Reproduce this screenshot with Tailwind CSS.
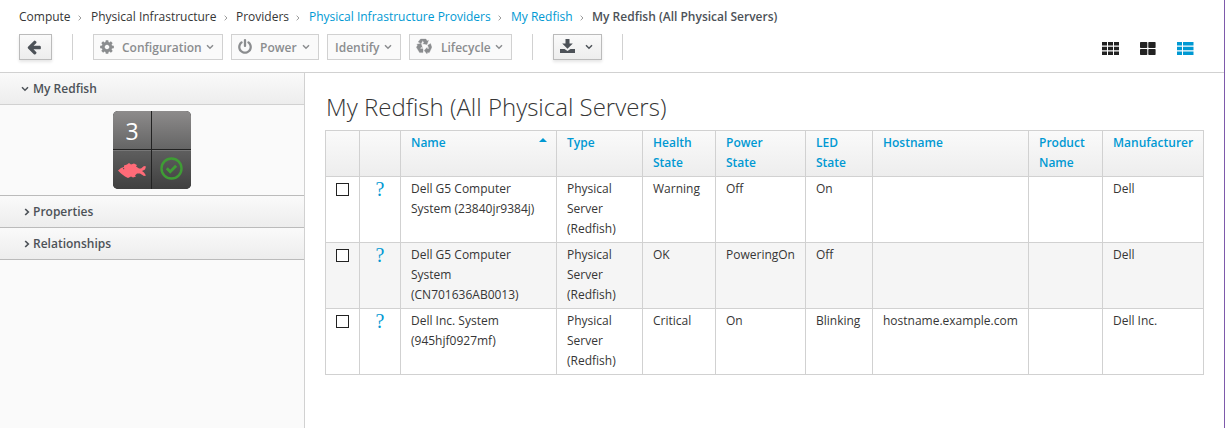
<!DOCTYPE html>
<html lang="en">
<head>
<meta charset="utf-8">
<title>My Redfish (All Physical Servers)</title>
<script src="https://cdn.jsdelivr.net/npm/@tailwindcss/browser@4"></script>
</head>
<body class="h-[428px] overflow-hidden bg-white font-['Open_Sans',sans-serif] text-xs leading-5 text-[#363636]">
<svg class="hidden">
  <symbol id="down" viewBox="0 0 8 6"><path d="M1 1.300 4 4.200 7 1.300" fill="none" stroke="currentColor" stroke-width="1.500"/></symbol>
  <symbol id="right" viewBox="0 0 6 8"><path d="M1.200 1 4.300 4 1.200 7" fill="none" stroke="currentColor" stroke-width="1.700"/></symbol>
  <symbol id="crumb" viewBox="0 0 4 6"><path d="M.6.700 3 3 .6 5.300" fill="none" stroke="currentColor" stroke-width="1"/></symbol>
</svg>
<div class="flex h-full flex-col border-r border-[#7e5aab]">
  <header class="flex h-[73px] shrink-0 flex-col border-b border-[#d1d1d1] pl-[19px]">
    <nav class="flex h-[34px] items-center whitespace-nowrap">
      <span class="w-[72px]">Compute<svg class="ml-[7px] inline h-1.5 w-1 text-[#9c9c9c]"><use href="#crumb"/></svg></span>
      <span class="w-[145px]">Physical Infrastructure<svg class="ml-[7px] inline h-1.5 w-1 text-[#9c9c9c]"><use href="#crumb"/></svg></span>
      <span class="w-[73px]">Providers<svg class="ml-[7px] inline h-1.5 w-1 text-[#9c9c9c]"><use href="#crumb"/></svg></span>
      <span class="w-[202px]"><a class="text-[#0099d3]">Physical Infrastructure Providers</a><svg class="ml-[7px] inline h-1.5 w-1 text-[#9c9c9c]"><use href="#crumb"/></svg></span>
      <span class="w-[81px]"><a class="text-[#0099d3]">My Redfish</a><svg class="ml-[7px] inline h-1.5 w-1 text-[#9c9c9c]"><use href="#crumb"/></svg></span>
      <span class="font-semibold text-[#4d5258]">My Redfish (All Physical Servers)</span>
    </nav>
    <div class="flex h-[26px] font-semibold text-[#8b8d8f]">
      <button class="flex w-[33px] items-center border border-[#bbb] bg-linear-to-b from-[#fafafa] to-[#ededed] pl-1.5 text-[#4d5258] shadow-[0_2px_3px_rgba(3,3,3,0.1)]"><svg class="h-4 w-4" viewBox="0 0 1792 1792" fill="currentColor"><path d="M1664 896v128q0 53-32.5 90.5t-84.5 37.5h-704l293 294q38 36 38 90t-38 90l-75 76q-37 37-90 37-52 0-91-37l-651-652q-37-37-37-90 0-52 37-91l651-650q38-38 91-38 52 0 90 38l75 74q38 38 38 91t-38 91l-293 293h704q52 0 84.5 37.5t32.5 90.5z"/></svg></button>
      <div class="ml-5 w-px bg-[#d1d1d1]"></div>
      <button class="ml-5 flex w-[130px] items-center border border-[#d1d1d1] bg-[#fafafa] pl-[5px]"><svg class="h-4 w-4" viewBox="0 0 1792 1792" fill="currentColor"><path d="M1152 896q0-106-75-181t-181-75-181 75-75 181 75 181 181 75 181-75 75-181zm512-109v222q0 12-8 23t-20 13l-185 28q-19 54-39 91 35 50 107 138 10 12 10 25t-9 23q-27 37-99 108t-94 71q-12 0-26-9l-138-108q-44 23-91 38-16 136-29 186-7 28-36 28h-222q-14 0-24.5-8.5t-11.5-21.5l-28-184q-49-16-90-37l-141 107q-10 9-25 9-14 0-25-11-126-114-165-168-7-10-7-23 0-12 8-23 15-21 51-66.5t54-70.5q-27-50-41-99l-183-27q-13-2-21-12.5t-8-23.5v-222q0-12 8-23t19-13l186-28q14-46 39-92-40-57-107-138-10-12-10-24 0-10 9-23 26-36 98.5-107.5t94.5-71.5q13 0 26 10l138 107q44-23 91-38 16-136 29-186 7-28 36-28h222q14 0 24.5 8.5t11.5 21.5l28 184q49 16 90 37l142-107q9-9 24-9 13 0 25 10 129 119 165 170 7 8 7 22 0 12-8 23-15 21-51 66.5t-54 70.5q26 50 41 98l183 28q13 2 21 12.5t8 23.5z"/></svg><span class="ml-[7px] w-[84px] pt-px text-left">Configuration</span><svg class="h-1.5 w-2"><use href="#down"/></svg></button>
      <button class="ml-2 flex w-[88px] items-center border border-[#d1d1d1] bg-[#fafafa] pl-[5px]"><svg class="h-4 w-4" viewBox="0 0 1792 1792" fill="currentColor"><path d="M1664 896q0 156-61 298t-164 245-245 164-298 61-298-61-245-164-164-245-61-298q0-182 80.5-343t226.5-270q43-32 95.5-25t83.5 50q32 42 24.5 94.5t-49.5 84.5q-98 74-151.5 181t-53.5 228q0 104 40.5 198.5t109.5 163.5 163.5 109.5 198.5 40.5 198.5-40.5 163.5-109.5 109.5-163.5 40.5-198.5q0-121-53.5-228t-151.5-181q-42-32-49.5-84.5t24.5-94.5q31-43 84-50t95 25q146 109 226.5 270t80.5 343zm-640-768v640q0 52-38 90t-90 38-90-38-38-90v-640q0-52 38-90t90-38 90 38 38 90z"/></svg><span class="ml-[7px] w-[42px] pt-px text-left">Power</span><svg class="h-1.5 w-2"><use href="#down"/></svg></button>
      <button class="ml-2 flex w-[74px] items-center border border-[#d1d1d1] bg-[#fafafa] pl-[7px]"><span class="w-[49px] pt-px text-left">Identify</span><svg class="h-1.5 w-2"><use href="#down"/></svg></button>
      <button class="ml-2 flex w-[103px] items-center border border-[#d1d1d1] bg-[#fafafa] pl-[6px]"><svg class="mb-0.5 h-4 w-4" viewBox="0 0 16 16" fill="currentColor" stroke="currentColor" stroke-width=".3"><path d="M4.600 1h5.300l1.300 2 1.300-.7-1.500 4.200-4.300-.7 1.400-.8L6.700 2.600 5.200 5.600 2.200 3.900zM.8 6.200l4.200-.6 1.400 4-1.200-.7-1 1.800H7v3.900H3.600L.4 9.300l1.300-2.200zM11.800 7.200l2.700-1.600 1.300 3.700-2.500 5.300h-2.200v1.300l-2.900-3.300 2.900-3.200v1.300h2z"/></svg><span class="ml-[9px] w-[54px] pt-px text-left">Lifecycle</span><svg class="h-1.5 w-2"><use href="#down"/></svg></button>
      <div class="ml-5 w-px bg-[#d1d1d1]"></div>
      <button class="ml-5 flex w-[49px] items-center border border-[#bbb] bg-linear-to-b from-[#fafafa] to-[#ededed] pl-[6px] text-[#4d5258] shadow-[0_2px_3px_rgba(3,3,3,0.1)]"><svg class="mb-[3px] h-[14px] w-[15px]" viewBox="0 0 15 14" fill="currentColor"><path d="M5.500 0h4v4.500h3.300L7.500 9.800 2.200 4.500h3.300zM0 10h4.500l3 2 3-2H15v4H0z"/></svg><svg class="ml-[10px] h-1.5 w-2"><use href="#down"/></svg></button>
      <div class="ml-5 w-px bg-[#d1d1d1]"></div>
      <div class="ml-auto flex items-center gap-[21px] pt-[3px] pr-[30px]">
        <svg class="h-[13px] w-[17px]" viewBox="0 0 17 13" fill="#222"><path d="M0 0h5v3.500H0zM6 0h5v3.500H6zM12 0h5v3.500h-5zM0 4.700h5v3.500H0zM6 4.700h5v3.500H6zM12 4.700h5v3.500h-5zM0 9.400h5V13H0zM6 9.400h5V13H6zM12 9.400h5V13h-5z"/></svg>
        <svg class="h-[13px] w-4" viewBox="0 0 16 13" fill="#222"><rect width="7.300" height="6" rx=".7"/><rect x="8.300" width="7.300" height="6" rx=".7"/><rect y="7" width="7.300" height="6" rx=".7"/><rect x="8.300" y="7" width="7.300" height="6" rx=".7"/></svg>
        <svg class="h-[13px] w-[17px]" viewBox="0 0 17 13" fill="#0099d3"><path d="M0 0h5v3.500H0zM6 0h10.500v3.500H6zM0 4.700h5v3.500H0zM6 4.700h10.500v3.500H6zM0 9.400h5V13H0zM6 9.400h10.500V13H6z"/></svg>
      </div>
    </div>
  </header>
  <div class="flex min-h-0 flex-1">
    <aside class="w-[305px] shrink-0 border-r border-[#d1d1d1] bg-[#fafafa] font-semibold text-[#4d5258]">
      <div class="flex h-8 items-center border-b border-[#d1d1d1] bg-linear-to-b from-[#fafafa] to-[#ededed] pl-[21px]"><svg class="mr-1 h-1.5 w-2"><use href="#down"/></svg>My Redfish</div>
      <div class="flex h-[91px] justify-center border-b border-[#bbb] pt-1.5">
        <div class="grid h-[78px] w-[78px] grid-cols-[38px_39px] grid-rows-[38px_39px] gap-px overflow-hidden rounded-[5px] bg-[#222]">
          <div class="flex items-center justify-center bg-linear-to-b from-[#8d8b8b] to-[#656565] pt-[2px] text-[23px] font-normal text-white">3</div>
          <div class="bg-linear-to-b from-[#8d8b8b] to-[#656565]"></div>
          <div class="flex items-center justify-center border-t border-[#777] bg-linear-to-b from-[#5e5e5e] to-[#404040]"><svg class="h-[15px] w-7" viewBox="0 0 28 15" fill="#ff6b78"><path d="M0 7.500 3 5l3-1V2.500l3-1L11 0l2 1.500L16 .5 19 2l-1 1.500 3 2h2l3-2.500 2 .5-1 3-3 1.500 2 1.500 2 3-2 .5-4-2.500h-3l-2 2 1 1-3 1-2-1-3 1.500-3-1.500-4-3z"/><rect x="5" y="5" width="1.200" height="1.200" fill="#555"/></svg></div>
          <div class="flex items-center justify-center border-t border-[#777] bg-linear-to-b from-[#5e5e5e] to-[#404040] pb-[3px]"><svg class="h-[23px] w-[23px]" viewBox="0 0 23 23" fill="none" stroke="#3f9c35"><circle cx="11.500" cy="11.500" r="10" stroke-width="2.400"/><path d="m6.800 11.300 3.400 3.400 6-6" stroke-width="2.900"/></svg></div>
        </div>
      </div>
      <div class="flex h-8 items-center border-b border-[#bbb] bg-linear-to-b from-[#fafafa] to-[#ededed] pl-6"><svg class="mr-[3px] h-2 w-1.5"><use href="#right"/></svg>Properties</div>
      <div class="flex h-8 items-center border-b border-[#bbb] bg-linear-to-b from-[#fafafa] to-[#ededed] pl-6"><svg class="mr-[3px] h-2 w-1.5"><use href="#right"/></svg>Relationships</div>
    </aside>
    <main class="pt-5 pl-5">
      <h1 class="h-[37px] pl-px text-2xl leading-7 font-light whitespace-nowrap">My Redfish (All Physical Servers)</h1>
      <table class="w-[879px] table-fixed border-separate border-spacing-0 border-t border-l border-[#d1d1d1] [&_td]:border-r [&_td]:border-b [&_td]:border-[#d1d1d1] [&_td]:px-2.5 [&_td]:pt-0.5 [&_td]:pb-[3px] [&_td]:align-top [&_th]:border-r [&_th]:border-b [&_th]:border-[#d1d1d1] [&_th]:px-2.5 [&_th]:pt-0.5 [&_th]:pb-[3px] [&_th]:text-left [&_th]:align-top [&_th]:font-semibold">
        <colgroup><col class="w-[34px]"><col class="w-[41px]"><col class="w-[156px]"><col class="w-[86px]"><col class="w-[73px]"><col class="w-[90px]"><col class="w-[67px]"><col class="w-[156px]"><col class="w-[74px]"><col class="w-[101px]"></colgroup>
        <thead><tr class="h-[46px] bg-linear-to-b from-[#fafafa] to-[#ededed] text-[#0099d3]">
          <th></th><th></th>
          <th><div class="flex justify-between">Name<svg class="mt-[5px] -mr-px h-1 w-2" viewBox="0 0 8 4" fill="currentColor"><path d="m0 4 4-4 4 4z"/></svg></div></th>
          <th>Type</th><th>Health State</th><th>Power State</th><th>LED State</th><th>Hostname</th><th>Product Name</th><th>Manufacturer</th>
        </tr></thead>
        <tbody>
          <tr class="h-[66px]"><td><div class="mt-1 h-[13px] w-[13px] border border-[#222] bg-white"></div></td><td class="text-center font-['Liberation_Serif',serif] text-xl text-[#0099d3]"><div class="-mt-[3px] leading-[26px]">?</div></td><td>Dell G5 Computer System (23840jr9384j)</td><td>Physical Server (Redfish)</td><td>Warning</td><td>Off</td><td>On</td><td></td><td></td><td>Dell</td></tr>
          <tr class="h-[66px] bg-[#f5f5f5]"><td><div class="mt-1 h-[13px] w-[13px] border border-[#222] bg-white"></div></td><td class="text-center font-['Liberation_Serif',serif] text-xl text-[#0099d3]"><div class="-mt-[3px] leading-[26px]">?</div></td><td>Dell G5 Computer System (CN701636AB0013)</td><td>Physical Server (Redfish)</td><td>OK</td><td>PoweringOn</td><td>Off</td><td></td><td></td><td>Dell</td></tr>
          <tr class="h-[66px]"><td><div class="mt-1 h-[13px] w-[13px] border border-[#222] bg-white"></div></td><td class="text-center font-['Liberation_Serif',serif] text-xl text-[#0099d3]"><div class="-mt-[3px] leading-[26px]">?</div></td><td>Dell Inc. System (945hjf0927mf)</td><td>Physical Server (Redfish)</td><td>Critical</td><td>On</td><td>Blinking</td><td>hostname.example.com</td><td></td><td>Dell Inc.</td></tr>
        </tbody>
      </table>
    </main>
  </div>
</div>
</body>
</html>
